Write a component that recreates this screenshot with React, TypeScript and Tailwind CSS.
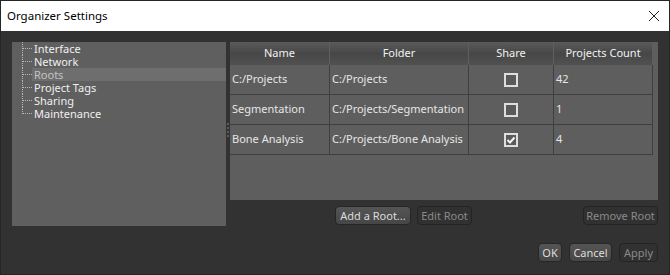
import React from 'react';

const font = { fontFamily: '"Noto Sans", "Liberation Sans", sans-serif' };

const treeItems = ['Interface', 'Network', 'Roots', 'Project Tags', 'Sharing', 'Maintenance'];

const roots = [
  { name: 'C:/Projects', folder: 'C:/Projects', share: false, count: '42' },
  { name: 'Segmentation', folder: 'C:/Projects/Segmentation', share: false, count: '1' },
  { name: 'Bone Analysis', folder: 'C:/Projects/Bone Analysis', share: true, count: '4' },
];

const Checkbox: React.FC<{ checked: boolean }> = ({ checked }) => (
  <div className="w-[14px] h-[14px] border-2 border-[#dedede] bg-[#5a5a5a] flex items-center justify-center">
    {checked && (
      <svg width="10" height="10" viewBox="0 0 10 10">
        <path d="M1.5 5 L4 7.5 L8.5 2.5" stroke="#f2f2f2" strokeWidth="2" fill="none" />
      </svg>
    )}
  </div>
);

const Btn: React.FC<{ label: string; disabled?: boolean; w: string }> = ({ label, disabled, w }) => (
  <div
    className={`${w} h-[19px] rounded-[4px] border flex items-center justify-center text-[11px] leading-none whitespace-nowrap ${
      disabled
        ? 'border-[#242424] bg-[#313131] text-[#8a8a8a]'
        : 'border-[#262626] bg-gradient-to-b from-[#555555] to-[#464646] text-[#dcdcdc]'
    }`}
  >
    {label}
  </div>
);

export default function App() {
  return (
    <div className="w-[670px] h-[275px] flex flex-col border border-[#262626] overflow-hidden" style={font}>
      <div className="h-[30px] bg-white flex items-center justify-between pl-[6px] pr-[9px] shrink-0">
        <span className="text-[11.5px] text-black">Organizer Settings</span>
        <svg width="12" height="12" viewBox="0 0 12 12">
          <path d="M1 1 L11 11 M11 1 L1 11" stroke="#222" strokeWidth="1" />
        </svg>
      </div>

      <div className="flex-1 bg-[#323232] flex flex-col pt-[11px] pl-[11px] pr-[11px]">
        <div className="flex h-[184px]">
          <div className="w-[214px] bg-[#5f5f5f]">
            {treeItems.map((item, i) => {
              const last = i === treeItems.length - 1;
              const selected = item === 'Roots';
              return (
                <div key={item} className="flex h-[13px]">
                  <div className="w-[10px]" />
                  <div className="w-[10px] relative">
                    <div
                      className={`absolute left-0 top-0 border-l border-dotted border-[#b8b8b8] ${last ? 'h-[7px]' : 'h-[13px]'}`}
                    />
                    <div className="absolute left-[1px] top-[6px] w-[9px] border-t border-dotted border-[#b8b8b8]" />
                  </div>
                  <div
                    className={`flex-1 pl-[2px] text-[11px] leading-[13px] whitespace-nowrap ${
                      selected ? 'bg-[#6e6e6e] text-[#c4c4c4]' : 'text-[#f0f0f0]'
                    }`}
                  >
                    {item}
                  </div>
                </div>
              );
            })}
          </div>

          <div className="w-[4px] flex flex-col items-center justify-center gap-[2px] pb-[8px]">
            {[0, 1, 2, 3].map(d => (
              <div key={d} className="w-[2px] h-[2px] bg-[#5c5c5c]" />
            ))}
          </div>

          <div className="flex-1 flex flex-col">
            <div className="h-[158px] bg-[#5e5e5e]">
              <div className="flex h-[23px] w-[423px] text-[11px] text-[#f2f2f2]">
                {[
                  ['Name', 'w-[100px]'],
                  ['Folder', 'w-[139px]'],
                  ['Share', 'w-[85px]'],
                  ['Projects Count', 'w-[99px]'],
                ].map(([h, w]) => (
                  <div
                    key={h}
                    className={`${w} flex items-center justify-center whitespace-nowrap border-r border-[#5f5f5f] bg-gradient-to-b from-[#5b5b5b] via-[#474747] to-[#515151]`}
                  >
                    {h}
                  </div>
                ))}
              </div>
              {roots.map(r => (
                <div key={r.name} className="flex h-[30px] w-[423px] text-[11px] text-[#e6e6e6] border-b border-[#3f3f3f] whitespace-nowrap">
                  <div className="w-[100px] flex items-center pl-[2px] border-r border-[#3f3f3f]">{r.name}</div>
                  <div className="w-[139px] flex items-center pl-[2px] border-r border-[#3f3f3f]">{r.folder}</div>
                  <div className="w-[85px] flex items-center justify-center border-r border-[#3f3f3f]">
                    <Checkbox checked={r.share} />
                  </div>
                  <div className="w-[99px] flex items-center pl-[2px] border-r border-[#3f3f3f]">{r.count}</div>
                </div>
              ))}
            </div>

            <div className="flex mt-[6px] pl-[105px] gap-[6px]">
              <Btn label="Add a Root..." w="w-[76px]" />
              <Btn label="Edit Root" w="w-[55px]" disabled />
              <div className="flex-1" />
              <Btn label="Remove Root" w="w-[75px]" disabled />
            </div>
          </div>
        </div>

        <div className="flex justify-end gap-[7px] mt-[17px]">
          <Btn label="OK" w="w-[24px]" />
          <Btn label="Cancel" w="w-[43px]" />
          <Btn label="Apply" w="w-[39px]" disabled />
        </div>
      </div>
    </div>
  );
}
